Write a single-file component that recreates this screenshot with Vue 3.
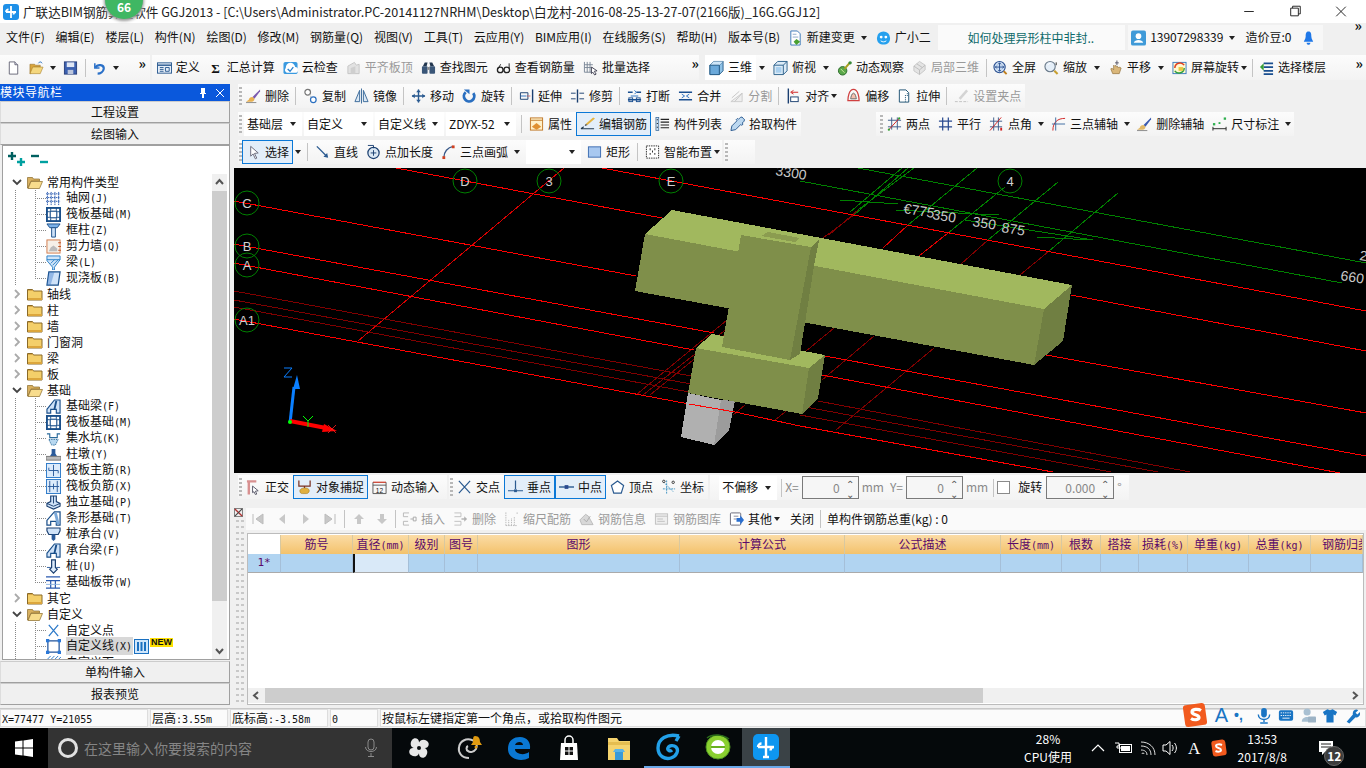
<template>
  <div class="app">
    <!-- barre de titre -->
    <header class="titlebar">
      <svg class="logo" viewBox="0 0 16 16"><rect width="16" height="16" rx="3" fill="#1e90e8" /><path d="M8 2v12M3 8h10M3 8a2.5 2.5 0 0 1 2.5-2.5M13 8a2.500 2.500 0 0 0-2.500 2.500" fill="none" stroke="#fff" stroke-width="1.800" /></svg>
      <span class="title-text">广联达BIM钢筋算量软件 GGJ2013 - [C:\Users\Administrator.PC-20141127NRHM\Desktop\白龙村-2016-08-25-13-27-07(2166版)_16G.GGJ12]</span>
      <div class="win-btns">
        <svg viewBox="0 0 46 24"><path d="M18 12h10" stroke="#222" /></svg>
        <svg viewBox="0 0 46 24"><path d="M18.500 8.500h8v8h-8zM20.500 8.500v-2h8v8h-2" fill="none" stroke="#222" /></svg>
        <svg viewBox="0 0 46 24"><path d="M18 7l10 10M28 7l-10 10" stroke="#222" /></svg>
      </div>
    </header>
    <div class="badge">66</div>

    <!-- menu -->
    <nav class="menubar">
      <span v-for="m in menus" :key="m" class="menu-item">{{ m }}</span>
      <span class="menu-extra first"><svg class="ic" viewBox="0 0 16 16" v-html="ic.change"></svg>新建变更<i class="caret"></i></span>
      <span class="menu-extra second"><svg class="ic" viewBox="0 0 16 16" v-html="ic.face"></svg>广小二</span>
      <span class="news">如何处理异形柱中非封..</span>
      <span class="user-box">
        <svg class="ic" viewBox="0 0 16 16" v-html="ic.user"></svg>13907298339<i class="caret"></i>
        <span class="bean">造价豆:0</span>
        <svg class="ic" viewBox="0 0 16 16" v-html="ic.bell"></svg>
      </span>
      <span class="more menu-more">»</span>
    </nav>

    <main class="body">
      <template v-for="row in rows" :key="row.id">
        <div v-if="row.id === 'canvas'" class="canvas">
          <svg viewBox="234 168 1132 305" width="1132" height="305" shape-rendering="crispEdges">
            <polyline v-for="(l, i) in scene.dark" :key="'d' + i" :points="l" stroke="#800000" fill="none" />
            <polyline v-for="(l, i) in scene.thin" :key="'t' + i" :points="l" stroke="#d80000" fill="none" />
            <polyline v-for="(l, i) in scene.green" :key="'g' + i" :points="l" stroke="#008000" fill="none" />
            <polyline v-for="(l, i) in scene.red" :key="'r' + i" :points="l" stroke="#ff0000" fill="none" />
            <g v-for="b in scene.bubbles" :key="b.t">
              <circle :cx="b.x" :cy="b.y" r="12" fill="none" stroke="#008000" shape-rendering="auto" />
              <text :x="b.x" :y="b.y + 5" text-anchor="middle" class="bubble-t" shape-rendering="auto">{{ b.t }}</text>
            </g>
            <text v-for="d in scene.dims" :key="d.t + d.x" :transform="`translate(${d.x} ${d.y}) rotate(9)`" class="dim-t">{{ d.t }}</text>
            <polygon v-for="(p, i) in scene.solids" :key="'s' + i" :points="p.pts" :fill="p.c" />
            <polyline points="689,404 735,412" stroke="#ff0000" fill="none" />
            <g shape-rendering="auto">
              <path d="M290 423l4-36" stroke="#0a7fff" stroke-width="3" />
              <path d="M297 375l-4 14h7z" fill="#0a7fff" />
              <path d="M290 421l36 7" stroke="#ff0000" stroke-width="4" />
              <path d="M337 431l-13-7-2 8z" fill="#ff0000" />
              <path d="M284 368h8l-8 9h8" fill="none" stroke="#0a7fff" />
              <path d="M303 416l5 5 5-5M308 421v6" fill="none" stroke="#00ff00" />
              <path d="M328 425l8 8M336 425l-8 8" fill="none" stroke="#ff2020" stroke-width=".8" />
              <circle cx="290" cy="422" r="2" fill="#00ff00" />
            </g>
          </svg>
        </div>

        <div v-else-if="row.id === 'table'" class="table-area">
          <div class="side-strip">
            <svg viewBox="0 0 10 10" class="close-x"><rect x=".5" y=".5" width="9" height="9" fill="#eee" stroke="#777" /><path d="M1 1l8 8" stroke="#b03030" stroke-width="1.500" /><path d="M9 1l-8 8" stroke="#444" stroke-width="1.200" /></svg>
            <i class="strip-dots"></i>
          </div>
          <div class="grid-box">
            <div class="grid-table">
              <div v-for="(h, i) in heads" :key="i" class="th">{{ h.t }}<span v-if="h.k" class="m">{{ h.k }}</span></div>
              <div v-for="(h, i) in heads" :key="'c' + i" class="td" :class="{ rowhead: i === 0, active: i === 2 }">{{ i === 0 ? '1*' : '' }}</div>
            </div>
            <div class="hscroll">
              <svg viewBox="0 0 16 15"><path d="M10 4l-4 3.500 4 3.500" fill="none" stroke="#555" stroke-width="2" /></svg>
              <div class="hthumb"></div>
              <svg class="hright" viewBox="0 0 16 15"><path d="M6 4l4 3.500-4 3.500" fill="none" stroke="#555" stroke-width="2" /></svg>
            </div>
          </div>
        </div>

        <div v-else class="row" :class="row.id">
          <div v-for="(seg, si) in row.segs" :key="si" class="seg" :class="seg.cls" :style="seg.ml ? { marginLeft: seg.ml + 'px' } : null">
            <template v-for="(it, k) in seg.items" :key="k">
              <i v-if="it.grip" class="grip"></i>
              <i v-else-if="it.sep" class="sep"></i>
              <span v-else-if="it.more" class="more">»</span>
              <i v-else-if="it.caret" class="caret" :class="{ tight: it.caret === 2 }"></i>
              <span v-else-if="it.combo !== undefined" class="combo" :style="{ width: it.w + 'px' }">{{ it.combo }}<i class="caret"></i></span>
              <span v-else-if="it.spin" class="spin" :style="{ width: it.w + 'px' }">{{ it.spin }}<span class="spin-btns"><b>⌃</b><b>⌄</b></span></span>
              <span v-else-if="it.lbl" class="lbl" :class="{ dark: it.dark }">{{ it.lbl }}</span>
              <i v-else-if="it.chk" class="chk"></i>
              <span v-else-if="it.nav" class="nav"><svg viewBox="0 0 14 14" v-html="ic[it.nav]"></svg></span>
              <span v-else class="ti" :class="{ off: it.off, on: it.on, white: it.white }">
                <svg v-if="it.i" class="ic" viewBox="0 0 16 16" v-html="ic[it.i]"></svg>
                <span v-if="it.t">{{ it.t }}</span>
              </span>
            </template>
          </div>
        </div>
      </template>

      <!-- navigation gauche -->
      <aside class="left">
        <div class="pane-title">
          <span>模块导航栏</span>
          <span class="pane-btns">
            <svg viewBox="0 0 12 12"><path d="M4 1h4v5h1v1H7v4H5V7H3V6h1z" fill="#fff" /></svg>
            <svg viewBox="0 0 12 12"><path d="M2 2l8 8M10 2l-8 8" stroke="#fff" /></svg>
          </span>
        </div>
        <div class="pane-tab">工程设置</div>
        <div class="pane-tab">绘图输入</div>
        <div class="tree-box">
          <div class="tree-tools">
            <svg viewBox="0 0 20 18"><path d="M5 1v8M1 5h8" stroke="#006060" stroke-width="2.400" /><path d="M14 7v8M10 11h8" stroke="#00a0a0" stroke-width="2.400" /></svg>
            <svg viewBox="0 0 20 18"><path d="M1 5h8" stroke="#006060" stroke-width="2.400" /><path d="M10 11h8" stroke="#00a0a0" stroke-width="2.400" /></svg>
          </div>
          <div class="tree-wrap">
            <div class="tree">
              <div v-for="n in tree" :key="n.id" class="tr" :class="[n.i ? 'leaf' : 'fold', { last: n.last, sel: n.sel }]">
                <template v-if="!n.i">
                  <svg class="chev" viewBox="0 0 10 10"><path :d="n.open ? 'M1 3l4 4 4-4' : 'M3 1l4 4-4 4'" fill="none" :stroke="n.open ? '#444' : '#aaa'" stroke-width="1.800" /></svg>
                  <svg class="fld" viewBox="0 0 16 14" v-html="n.open ? ic.fopen : ic.fclosed"></svg>
                </template>
                <svg v-else class="tree-ic" viewBox="0 0 16 16" v-html="ic[n.i]"></svg>
                <span class="tr-label">{{ n.t }}<span v-if="n.k" class="m">{{ n.k }}</span></span>
                <template v-if="n.sel">
                  <svg class="bars" viewBox="0 0 15 15"><rect x=".5" y=".5" width="14" height="14" fill="#cfe6fb" stroke="#1a70c0" /><path d="M4 3v9M7.500 3v9M11 3v9" stroke="#1a70c0" stroke-width="2" /></svg>
                  <em class="newtag">NEW</em>
                </template>
              </div>
            </div>
            <div class="vscroll">
              <svg viewBox="0 0 15 17"><path d="M4 10l3.500-4 3.500 4" fill="none" stroke="#555" stroke-width="2" /></svg>
              <div class="vtrack"><div class="vthumb"></div></div>
              <svg viewBox="0 0 15 17"><path d="M4 7l3.500 4 3.500-4" fill="none" stroke="#555" stroke-width="2" /></svg>
            </div>
          </div>
        </div>
        <div class="pane-tab">单构件输入</div>
        <div class="pane-tab">报表预览</div>
      </aside>
    </main>

    <footer class="status">
      <div class="st w1"><span class="m">X=77477 Y=21055</span></div>
      <div class="st w2">层高<span class="m">:3.55m</span></div>
      <div class="st w3">底标高<span class="m">:-3.58m</span></div>
      <div class="st w4"><span class="m">0</span></div>
      <div class="st w5">按鼠标左键指定第一个角点，或拾取构件图元</div>
    </footer>

    <!-- barre de saisie flottante -->
    <div class="ime">
      <svg class="ime-s" viewBox="0 0 26 26"><rect x="2" y="2" width="22" height="22" rx="3" fill="#f25a1e" transform="rotate(-8 13 13)" /><path d="M19 8.500c-3-2-9-1.500-9 1.500 0 3.500 7 2 7 5.500 0 2.500-5 3-8 1" fill="none" stroke="#fff" stroke-width="3.200" /></svg>
      <span class="ime-a">A</span>
      <span class="ime-dots">•,</span>
      <svg viewBox="0 0 16 18"><rect x="5" y="1" width="6" height="10" rx="3" fill="#1a75c4" /><path d="M2 8c0 7 12 7 12 0M8 13v3M4 17h8" fill="none" stroke="#1a75c4" stroke-width="1.500" /></svg>
      <svg viewBox="0 0 18 16"><rect x="1" y="2" width="16" height="12" rx="2" fill="#1a75c4" /><path d="M3 5h12M3 8h12" stroke="#fff" stroke-dasharray="1.500 1" /><path d="M5 11h8" stroke="#fff" /></svg>
      <svg viewBox="0 0 18 18"><circle cx="8" cy="5" r="4" fill="#a9c0d2" /><path d="M2 16c0-7 12-7 12 0z" fill="#a9c0d2" /><rect x="9" y="10" width="9" height="7" rx="1" fill="#9db3c5" /></svg>
      <svg viewBox="0 0 18 18"><path d="M6 2l3 1 3-1 5 3-2 4-2-1v9H5V8L3 9 1 5z" fill="#1a75c4" /></svg>
      <svg viewBox="0 0 18 18"><path d="M3 16l7-8c-1-4 3-7 6-5l-3 3 2 2 3-3c1 4-2 7-5 6l-7 7z" fill="#1a75c4" /></svg>
    </div>

    <!-- barre des tâches -->
    <footer class="taskbar">
      <div class="start"><svg viewBox="0 0 18 18"><path d="M0 2.500l7.500-1v7H0zM8.500 1.400L18 0v8.500H8.500zM0 9.500h7.500v7l-7.500-1zM8.500 9.500H18V18l-9.500-1.400z" fill="#fff" /></svg></div>
      <div class="search">
        <i class="ring"></i>
        <span class="search-text">在这里输入你要搜索的内容</span>
        <svg viewBox="0 0 14 20"><rect x="4" y="1" width="6" height="11" rx="3" fill="none" stroke="#8a8a8a" /><path d="M1.500 9c0 6 11 6 11 0M7 15v3M4 18.500h6" fill="none" stroke="#8a8a8a" /></svg>
      </div>
      <div v-for="a in taskApps" :key="a.id" class="app-cell" :class="a.cls">
        <svg viewBox="0 0 28 28" v-html="ic[a.id]"></svg>
      </div>
      <div class="tray">
        <div class="cpu"><span>28%</span><span>CPU使用</span></div>
        <svg class="tr1" viewBox="0 0 14 10"><path d="M1 8l6-6 6 6" fill="none" stroke="#fff" stroke-width="1.200" /></svg>
        <svg class="tr2" viewBox="0 0 18 14"><path d="M0 2h4v3H2v2h4" fill="none" stroke="#fff" /><rect x="4.500" y="3.500" width="12" height="8" fill="none" stroke="#fff" /><rect x="6" y="5" width="9" height="5" fill="#fff" /></svg>
        <svg class="tr3" viewBox="0 0 16 16"><path d="M2 14a1 1 0 0 1 2 0M1 10c4 0 6 2 6 5M1 6c6 0 10 3 10 9M1 2c8 0 14 5 14 13" fill="none" stroke="#ddd" /></svg>
        <svg class="tr4" viewBox="0 0 16 16"><path d="M1 5h3l4-3.500v13L4 11H1z" fill="none" stroke="#fff" /><path d="M10 5c1.500 2 1.500 4 0 6M12.500 3c2.500 3 2.500 7 0 10" fill="none" stroke="#fff" /></svg>
        <span class="tr5">A</span>
        <svg class="tr6" viewBox="0 0 18 18"><rect x="2" y="1" width="14" height="16" rx="3" fill="#f25a1e" transform="rotate(-8 9 9)" /><path d="M12 6c-2-1-6-1-6 1 0 2.500 5 1.500 5 4 0 2-3.500 2-5.500 1" fill="none" stroke="#fff" stroke-width="2" /></svg>
        <div class="clock"><span>13:53</span><span>2017/8/8</span></div>
        <div class="notif">
          <svg viewBox="0 0 16 16"><path d="M1 1h14v11H7l-3 3v-3H1z" fill="#fff" /><path d="M3 4h10M3 7h10" stroke="#222" /></svg>
          <b class="notif-n">12</b>
        </div>
      </div>
    </footer>
  </div>
</template>

<script setup>
const menus = ['文件(F)', '编辑(E)', '楼层(L)', '构件(N)', '绘图(D)', '修改(M)', '钢筋量(Q)', '视图(V)', '工具(T)', '云应用(Y)', 'BIM应用(I)', '在线服务(S)', '帮助(H)', '版本号(B)']

// petites icônes dessinées à la main
const ic = {
  new: '<path d="M3.500 1.500h6l3 3v10h-9z" fill="#fff" stroke="#667"/><path d="M9.500 1.500v3h3" fill="#dde" stroke="#667"/>',
  open: '<path d="M1 4h5l1 1h5v2H5l-3 7H1z" fill="#d9a53c" stroke="#96702a" stroke-width=".6"/><path d="M4 7h11l-3 7H1z" fill="#f4d77e" stroke="#a67f2e" stroke-width=".6"/><path d="M10 3c1-2 3-2 4 0" fill="none" stroke="#2a70c0"/>',
  save: '<rect x="1.500" y="1.500" width="13" height="13" fill="#3b60b0" stroke="#2a3f7a"/><rect x="4" y="2" width="8" height="5" fill="#dfe6f4"/><rect x="5" y="10" width="6" height="4.500" fill="#bcc6dc"/>',
  undo: '<path d="M3 3v5h5" fill="none" stroke="#2a70c8" stroke-width="1.600"/><path d="M3.500 7.500C6 3.500 13 4 12.500 9 12 12 9 14 6 14" fill="none" stroke="#2a70c8" stroke-width="2.400"/>',
  def: '<rect x=".5" y="2.500" width="15" height="11" fill="#e6eef8" stroke="#2a5a90"/><path d="M1 5h14" stroke="#2a5a90" stroke-width="1.500"/><path d="M3 7.500h4M3 9.500h4M3 11.500h4M9 7.500h4v4H9z" fill="none" stroke="#2a5a90"/>',
  sigma: '<text x="8" y="13" font-size="14" font-weight="bold" text-anchor="middle" font-family="Liberation Serif,serif" fill="#111">Σ</text>',
  cloud: '<rect x=".5" y="1.500" width="15" height="13" rx="2" fill="#3a9ae0"/><path d="M3 8a5 5 0 0 1 10-1 3 3 0 0 1 0 6H4a3 3 0 0 1-1-5z" fill="#fff"/><path d="M5 9l2.500 2.500L11 7" fill="none" stroke="#2a80cc" stroke-width="1.400"/>',
  plate: '<path d="M2 14V6l7-4 2 3 3-1v10z" fill="#e2e2e2" stroke="#c4c4c4"/><path d="M5 14V8l5-2v8z" fill="#cfcfcf"/>',
  binoc: '<path d="M2 6h4l1-4H4zM14 6h-4L9 2h3z" fill="#22364f"/><rect x="1" y="6" width="6" height="8" rx="1" fill="#3a5678"/><rect x="9" y="6" width="6" height="8" rx="1" fill="#3a5678"/><rect x="7" y="7" width="2" height="3" fill="#888"/>',
  glasses: '<circle cx="4.500" cy="10" r="3" fill="none" stroke="#222" stroke-width="1.400"/><circle cx="11.500" cy="10" r="3" fill="none" stroke="#222" stroke-width="1.400"/><path d="M7.500 10h1M2 9L5 4M14 9V3" stroke="#222" fill="none"/>',
  bulk: '<path d="M1.500 1.500v11h9M1.500 4.500h9M1.500 7.500h9M4.500 1.500v11M7.500 1.500v11" fill="none" stroke="#7a8696"/><path d="M9 7l6 4-3 .5 2 3-1.500 1-2-3L9 14z" fill="#fff" stroke="#445"/>',
  cube: '<path d="M1 5l4-4h10v10l-4 4H1z" fill="#8fc3e8" stroke="#2a5f8a"/><path d="M1 5h10v10M11 5l4-4" fill="none" stroke="#2a5f8a"/><path d="M1 5l4-4h10l-4 4z" fill="#cfe6f8"/><path d="M1 5h10v10H1z" fill="#6ba9da" stroke="#2a5f8a"/>',
  top: '<path d="M1 5l4-4h10v10l-4 4H1z" fill="#dcebf7" stroke="#2a5f8a"/><path d="M1 5h10v10M11 5l4-4" fill="none" stroke="#2a5f8a"/><path d="M3 7h6v6H3z" fill="#a8cfee"/>',
  orbit: '<circle cx="6" cy="11" r="4.500" fill="#5aa84a" stroke="#2a6a2a"/><path d="M8 9l6-7" stroke="#a8a020" stroke-width="2.200"/><circle cx="14" cy="2.500" r="1.800" fill="#3a8a3a"/><path d="M4 9l4 4" stroke="#d4e8a0"/>',
  local: '<path d="M2 6l6-5 6 4v5l-6 5-6-4z" fill="#e4e4e4" stroke="#c6c6c6"/><path d="M2 6l6 4 6-5M8 10v5M5 3.500l6 4" fill="none" stroke="#bcbcbc"/>',
  full: '<circle cx="7" cy="7" r="6" fill="#cfe0f4" stroke="#2a4f90" stroke-width="1.200"/><path d="M7 2.500v9M2.500 7h9" stroke="#2a4f90"/><path d="M5.500 4L7 2.500 8.500 4M5.500 10L7 11.500 8.500 10M4 5.500L2.500 7 4 8.500M10 5.500L11.500 7 10 8.500" fill="none" stroke="#2a4f90"/><path d="M11.500 11.500l3 3" stroke="#c08020" stroke-width="2"/>',
  zoom: '<circle cx="6.500" cy="6.500" r="5.500" fill="#e4eef8" stroke="#6a7a8a" stroke-width="1.200"/><path d="M4 5a3 3 0 0 1 3-2" stroke="#fff" fill="none"/><path d="M11 11l3.500 3.500" stroke="#c8a030" stroke-width="2.200"/><path d="M13 2v3" stroke="#222"/>',
  pan: '<path d="M3 9l2 5h7l2-6-2-1-1 1-1-2-1 1-1-2-1 1-1-1v5L4 8z" fill="#dab77a" stroke="#90703a" stroke-width=".7"/><path d="M9.500 0v5M7.500 2.500h4" stroke="#556" />',
  rot: '<rect x="1" y="2" width="14" height="12" fill="#fff8d0" stroke="#3a7ac0"/><path d="M3 8a5.500 5.500 0 0 1 10-3" fill="none" stroke="#e04020" stroke-width="1.600"/><path d="M13 8a5.500 5.500 0 0 1-10 3" fill="none" stroke="#30a040" stroke-width="1.600"/><rect x="7" y="7" width="5" height="4" fill="#e8c840"/>',
  floors: '<path d="M5 3h10M5 7h10M5 11h10M5 14.500h10" stroke="#1a4f90" stroke-width="2"/><path d="M1 7l4-4v8z" fill="#38a038"/>',
  del: '<path d="M15 1L7 9l2 2 6-8z" fill="#7b5ab0"/><path d="M7 9c-3 0-4 2-4 3l-3 2h6c2 0 3-1 3-3z" fill="#e8b050"/><path d="M0 15h11" stroke="#888"/>',
  copy: '<circle cx="5" cy="4" r="3" fill="#fff" stroke="#777" stroke-width="1.300"/><circle cx="11" cy="12" r="3" fill="#fff" stroke="#2a6fc0" stroke-width="1.300"/><path d="M7 6l2 4" stroke="#999" stroke-dasharray="1 1"/>',
  mirror: '<path d="M1 14L6 2v12zM15 14L10 2v12z" fill="#dbe8f4" stroke="#3a6a9a"/><path d="M8 0v16" stroke="#3a6a9a"/>',
  move: '<path d="M8 1v14M1 8h14" stroke="#2a5a90" stroke-width="1.500"/><path d="M5.500 4L8 1l2.500 3M5.500 12L8 15l2.500-3M4 5.500L1 8l3 2.500M12 5.500L15 8l-3 2.500" fill="#2a5a90"/>',
  turn: '<path d="M12 5a5.500 5.500 0 1 1-8-1" fill="none" stroke="#2a6fc0" stroke-width="3"/><path d="M2 1h6v5z" fill="#2a6fc0"/>',
  extend: '<path d="M14.500 1v14" stroke="#1a3f70" stroke-width="1.500"/><path d="M1.500 4.500h8v7h-8z" fill="none" stroke="#1a3f70"/><path d="M9 8h1M11 8h1" stroke="#d02020"/><path d="M2 8h6" stroke="#2a6fc0"/>',
  trim: '<path d="M8 1v14" stroke="#1a3f70" stroke-width="1.500"/><path d="M1 5h5M1 11h5M10 5h5M10 11h5" stroke="#1a3f70"/>',
  brk: '<path d="M1 4h5M10 4h5M1 12h14" stroke="#1a4f90" stroke-width="1.500"/><path d="M8 2l2 2-2 2M4 8h8" fill="none" stroke="#2a6fc0"/><rect x="2" y="10" width="4" height="4" fill="none" stroke="#1a4f90"/><rect x="10" y="10" width="4" height="4" fill="none" stroke="#1a4f90"/>',
  merge: '<path d="M1 4h14M1 12h14" stroke="#1a4f90" stroke-width="1.500"/><path d="M4 6L7 8 4 10M12 6L9 8l3 2" fill="none" stroke="#2a6fc0"/>',
  split: '<path d="M2 14h12v-9z" fill="#eee" stroke="#ccc"/><path d="M3 10l8-7M6 14l8-9" stroke="#c4c4c4"/>',
  align: '<path d="M2.500 0v16" stroke="#1a3f70" stroke-width="1.500"/><rect x="5" y="9" width="8" height="5" fill="#fff" stroke="#1a3f70"/><path d="M13 4H6M8 2L5 4l3 2" fill="none" stroke="#d02020"/>',
  offset: '<path d="M8 1c5 0 6 9 6 12H2C2 10 3 1 8 1z" fill="none" stroke="#d04040" stroke-width="1.300"/><path d="M8 5c2 0 3 5 3 6H5c0-1 1-6 3-6z" fill="#f4c0b0" stroke="#666"/>',
  stretch: '<path d="M2.500 1.500h7l3 3v10h-10z" fill="#fff" stroke="#1a4f70"/><path d="M9 7v7M11 5v3" stroke="#1a4f70" stroke-dasharray="1 1"/>',
  grippt: '<path d="M13 1L5 10l2 2 8-9z" fill="#d4d4d4"/><path d="M1 14h14" stroke="#c0c0c0" stroke-dasharray="3 1.500"/>',
  attr: '<rect x="1.500" y="1.500" width="13" height="13" fill="#fff0c8" stroke="#c07828"/><path d="M1.500 4h13" stroke="#c07828"/><path d="M3 11l5-4 5 4-5 3z" fill="#e09030"/>',
  edit: '<path d="M14 1l2 1-8 7-2-1z" fill="#e4b440"/><path d="M6 8l2 1-3 1z" fill="#333"/><path d="M1 13h14M1 13l3-2" fill="none" stroke="#20384f" stroke-width="1.200"/>',
  list: '<rect x="1" y="1" width="3" height="14" fill="#cfe0f0" stroke="#3a6a9a" stroke-width=".8"/><path d="M6 3h9M6 6h9M6 9h9M6 12h9M2.500 3v1M2.500 7v1M2.500 11v1" stroke="#222" stroke-width="1.200"/>',
  pick: '<path d="M14 2a2 2 0 0 0-3-1L9 3 8 2 6.500 3.500l1 1L2 10l-1 5 5-1 5.500-5.500 1 1L14 8l-1-1 2-2a2 2 0 0 0-1-3z" fill="#bcd8f0" stroke="#2a5a90"/>',
  twopt: '<path d="M5 1v13M1 4h14M11 1v13M1 11h14" stroke="#3a5a8a"/><path d="M2 14L13 2" stroke="#d02020"/><circle cx="13" cy="2" r="1.200" fill="#30a030"/><circle cx="2" cy="14" r="1.200" fill="#30a030"/>',
  para: '<path d="M5 1v14M11 1v14M1 5h14M1 11h14" stroke="#2a4a90" stroke-width="1.300"/>',
  ang: '<path d="M5 1v14M10 1v14M1 5h13M1 11h13" stroke="#3a5a8a"/><path d="M1 15L13 1" stroke="#d02020"/><path d="M13 12v3" stroke="#d02020" stroke-width="2"/>',
  arc3: '<path d="M2 15C2 6 7 2 15 2" fill="none" stroke="#d02020"/><path d="M5 1v14M1 8h14" stroke="#3a6aa0"/>',
  brush: '<path d="M15 1L7 9l2 2 6-8z" fill="#3a5ab0"/><path d="M7 9c-3 0-4 2-4 3l-3 2h6c2 0 3-1 3-3z" fill="#e0b868"/><path d="M0 15h11" stroke="#888"/>',
  dim: '<path d="M1 11v4M15 11v4M1 13h14" stroke="#222"/><rect x="1" y="7" width="2.500" height="2.500" fill="#30b050"/><rect x="12.500" y="1" width="2.500" height="2.500" fill="#30b050"/><rect x="7" y="6" width="2" height="2" fill="#30b050"/>',
  select: '<path d="M5 2l8 7-4 .5 2.500 5-1.500.8L7.500 10 5 12.500z" fill="#fff" stroke="#667"/>',
  line: '<path d="M2 2l11 11" stroke="#2a5a90" stroke-width="1.400"/><path d="M14 14l-5-1 4-4z" fill="#2a5a90"/>',
  ptlen: '<circle cx="8" cy="9" r="6" fill="#dbe8f4" stroke="#1a3f70" stroke-width="1.300"/><path d="M8 6v6M5 9h6" stroke="#1a3f70"/><path d="M2 1h6v3" fill="none" stroke="#1a3f70"/>',
  arc: '<path d="M3 14C3 8 7 3 13 2" fill="none" stroke="#3a5a8a" stroke-width="1.400"/><rect x="1.500" y="12.500" width="3" height="3" fill="#d04020"/><rect x="11.500" y="1" width="3" height="3" fill="#d04020"/>',
  rect: '<rect x="1.500" y="2.500" width="13" height="11" fill="#a8c8f0" stroke="#3a6ab0"/>',
  smart: '<rect x="1.500" y="1.500" width="13" height="13" fill="#fff" stroke="#222" stroke-dasharray="1.500 1"/><path d="M5 5h1M10 5h1M5 10h1M10 10h1M7.500 7.500h1" stroke="#222" stroke-width="2"/>',
  ortho: '<path d="M1 2h10M3 2v14" stroke="#d89090" stroke-width="2.600"/><path d="M7 7l6 5-3 .5 1.500 3-1.500.5-1.500-3L7 14z" fill="#fff" stroke="#556"/>',
  snap: '<path d="M2 1v6h12V1M8 7v2" fill="none" stroke="#7a3020" stroke-width="1.300"/><path d="M3 12c0-3 7-4 9-2 2 1 1 5-2 5H6c-2 0-3-1-3-3z" fill="#e0b040" stroke="#a07818" stroke-width=".6"/>',
  dyn: '<path d="M1 3h14" stroke="#d05040" stroke-width="1.500"/><path d="M1 6h14M1 3v12M15 3v12M1 15h14" fill="none" stroke="#555"/><text x="8" y="14" font-size="7" text-anchor="middle" font-family="Liberation Sans,sans-serif" fill="#111">12</text>',
  cross: '<path d="M2 1.500l12 13M14 1.500l-12 13" stroke="#2a5a90" stroke-width="1.300"/>',
  perp: '<path d="M8 1v9M0 12h16" stroke="#2a5a90" stroke-width="1.300"/><rect x="6.500" y="10.500" width="3" height="3" fill="#2a5a90"/>',
  mid: '<path d="M0 8h16" stroke="#2a5a90" stroke-width="1.500"/><rect x="6" y="6" width="4" height="4" fill="#2a4a90"/>',
  vertex: '<path d="M8 1.500l6.500 5-2.500 8H4l-2.500-8z" fill="#fff" stroke="#2a5a90" stroke-width="1.300"/>',
  coord: '<path d="M6 1v14M2 10h13" stroke="#3a90c0" stroke-dasharray="2 1"/><path d="M3 3l10 10" stroke="#3a90c0" stroke-dasharray="1.500 1"/><circle cx="3" cy="2" r="1.300" fill="none" stroke="#333"/><circle cx="13" cy="3" r="1.300" fill="none" stroke="#333"/>',
  first: '<path d="M2 2v10M12 2L5 7l7 5z" fill="#c8c8c8" stroke="#bcbcbc"/>',
  prev: '<path d="M10 2L4 7l6 5z" fill="#c8c8c8"/>',
  next: '<path d="M4 2l6 5-6 5z" fill="#c8c8c8"/>',
  lastn: '<path d="M12 2v10M2 2l7 5-7 5z" fill="#c8c8c8" stroke="#bcbcbc"/>',
  up: '<path d="M7 2L2 7h3v5h4V7h3z" fill="#c8c8c8"/>',
  down: '<path d="M7 12l5-5H9V2H5v5H2z" fill="#c8c8c8"/>',
  ins: '<path d="M1.500 1.500h6M1.500 14.500h6M1.500 1.500v4h5M1.500 14.500v-4h5" fill="none" stroke="#b8b8b8"/><path d="M9 8h3M12 6h3v4h-3z" fill="none" stroke="#a8a8a8"/>',
  rm: '<path d="M1.500 1.500h7v4h-7M1.500 14.500h7v-4h-7" fill="none" stroke="#c0c0c0"/><path d="M9 8h4" stroke="#b0b0b0" stroke-width="1.500"/><path d="M12 5l3 3-3 3z" fill="#b0b0b0"/>',
  scale: '<path d="M2 1v14M14 1v2M2 15h12M5 15V9M8 15V7M11 15V5" stroke="#b8b8b8" stroke-dasharray="1.500 1"/>',
  info: '<path d="M1 9l6-6 3 2 5 9H3z" fill="#d8d8d8" stroke="#bbb"/><path d="M5 8l3 3 4-6" stroke="#aaa" fill="none"/>',
  lib: '<rect x="1.500" y="2.500" width="13" height="11" fill="#eee" stroke="#c0c0c0"/><path d="M1.500 5h13M3.500 8h6M3.500 10.500h8" stroke="#c0c0c0"/>',
  other: '<rect x="1.500" y="1.500" width="11" height="13" rx="1" fill="#fff" stroke="#667"/><path d="M5 5h5M5 8h3" stroke="#889"/><path d="M8 7h4V4l4 5-4 5v-3H8z" fill="#2a6fd0"/>',
  change: '<path d="M3 .5h7l3 3v12H3z" fill="#fff" stroke="#3a78b8"/><path d="M5 4h4M5 7h6" stroke="#8aa8c8"/><path d="M9 9l4 3-4 3.500L6 12z" fill="#4aa030"/>',
  face: '<path d="M8 1a7 7 0 0 1 7 7c0 5-3 7-7 7s-7-2-7-7a7 7 0 0 1 7-7z" fill="#25a0ee"/><circle cx="5.500" cy="7" r="1.500" fill="#fff"/><circle cx="10.500" cy="7" r="1.500" fill="#fff"/><path d="M5 11c2 1.500 4 1.500 6 0" fill="none" stroke="#fff"/>',
  user: '<rect width="16" height="16" rx="2" fill="#3f9ad8"/><circle cx="8" cy="6" r="3" fill="#fff"/><path d="M3 13c1-4 9-4 10 0z" fill="#fff"/>',
  bell: '<path d="M8 1c3 0 3 3 3 5 0 3 2 5 2 6H3c0-1 2-3 2-6 0-2 0-5 3-5z" fill="#1f78e8"/><path d="M6 13c0 3 4 3 4 0z" fill="#1f78e8"/>',
  fclosed: '<path d="M.5 2.500h5l1 1.500h8.500v9H.5z" fill="#f4cf6a" stroke="#8a6a28"/><path d="M1 3h5v1H1z" fill="#d8a84a"/><path d="M1 11h14v2H1z" fill="#dca63c"/>',
  fopen: '<path d="M.5 2.500h5l1 1.500h6v2H4l-3 7H.5z" fill="#d8b060" stroke="#8a6a28" stroke-width=".7"/><path d="M4 6.500h11.500l-3 7H1z" fill="#f8dc8c" stroke="#8a6a28" stroke-width=".7"/>',
  grid: '<path d="M1.500 1v14M5.500 1v14M9.500 1v14M13.500 1v14M0 3h15M0 7h15M0 11h15" stroke="#2a5ab0" stroke-dasharray="1.500 .6"/>',
  raft: '<rect x="1" y="1" width="14" height="14" fill="none" stroke="#1a4f8a" stroke-width="2"/><rect x="4.500" y="4.500" width="7" height="7" fill="none" stroke="#1a4f8a" stroke-width="1.200"/><path d="M1 5h3M12 5h3M1 11h3M12 11h3M5 1v3M11 1v3M5 12v3M11 12v3" stroke="#1a4f8a"/>',
  column: '<path d="M1 1h14l-3 4H4z" fill="#7ab0e8" stroke="#1a4f8a"/><path d="M6 5h4v10H6z" fill="#cfe2f8" stroke="#1a4f8a"/>',
  wall: '<rect x="1" y="1" width="14" height="14" fill="#f6f0e8" stroke="#d07848"/><path d="M3 13h9v-3l-4-3-3 2z" fill="#bbb"/><path d="M13 4h3M13 8h3M13 12h3" stroke="#c05020"/>',
  beam: '<path d="M1 1h14v4L9 13v3H7v-3L1 6z" fill="#cfe4f8" stroke="#2a80c8"/><path d="M1 5h14M5 9l4-4M7 11l6-6" stroke="#2a80c8"/>',
  slab: '<path d="M3 1h12l-2 14H1z" fill="#cfe2f8" stroke="#1a4f8a" stroke-width="1.300"/><path d="M3 1h6L5 15H1z" fill="#3a78c8" opacity=".4"/>',
  fbeam: '<path d="M1 15V11L9 1h6v14h-4v-4H5v4z" fill="#cfe2f8" stroke="#1a4f8a" stroke-width="1.200"/><path d="M11 2L9 11" stroke="#1a4f8a" stroke-width="2"/>',
  pit: '<path d="M1 3h3v4h8V3h3" fill="none" stroke="#2a6a9a" stroke-width="1.200"/><path d="M3 9h10l-3 6H6z" fill="#b8d8f0" stroke="#2a6a9a" stroke-dasharray="1.500 1"/>',
  pier: '<path d="M6 2h4v5l2 3H4l2-3z" fill="#2a5a9a"/><rect x="0" y="10" width="16" height="4" fill="#bbb" stroke="#777"/>',
  mainbar: '<rect x=".5" y=".5" width="15" height="15" fill="#dcebfb" stroke="#2a78c8"/><path d="M8 2v12M3 8h10M3 8V5M13 8v3" stroke="#2a5a9a" fill="none"/>',
  negbar: '<rect x=".5" y=".5" width="15" height="15" fill="#dcebfb" stroke="#2a78c8"/><path d="M4 2v12M12 2v12M2 8h12M8 5v6" stroke="#2a5a9a" fill="none"/>',
  footing: '<path d="M5 1h6v6l4 2v3l-7 3-7-3V9l4-2z" fill="#cfe2f8" stroke="#1a3f70" stroke-width="1.200"/><path d="M8 1v8M1 9l7 3 7-3" stroke="#1a3f70" fill="none"/>',
  strip: '<path d="M1 15v-5L7 3l2-2h6v14h-4v-4H5v4z" fill="#fff" stroke="#1a4f8a" stroke-width="1.300"/><path d="M10 2l3 12" stroke="#7aa8d8" stroke-width="3"/>',
  cap: '<path d="M1 1h14v3l-2 4H3L1 4z" fill="#cfe2f8" stroke="#1a3f70" stroke-width="1.200"/><path d="M6 8h4v5l-2 2-2-2z" fill="#2a5a9a"/>',
  pile: '<path d="M6 1h4v8l2 2-4 4-4-4 2-2z" fill="#dcebfb" stroke="#1a3f70" stroke-width="1.300"/><path d="M1 9h4M11 9h4" stroke="#2a5a9a"/>',
  band: '<path d="M0 2h15M0 6h15M0 14h15M5 6v8M10 6v8" stroke="#2a5ab0" stroke-width="1.300" /><path d="M0 10h15" stroke="#8ab0e0"/>',
  xpt: '<path d="M3 2l10 12M13 2L3 14" stroke="#2a78c8" stroke-width="1.300"/>',
  xline: '<rect x="2" y="2" width="12" height="12" fill="none" stroke="#1a4f9a" stroke-width="1.300"/><g fill="#2a78d8"><rect x="0" y="0" width="3.500" height="3.500"/><rect x="12.500" y="0" width="3.500" height="3.500"/><rect x="0" y="12.500" width="3.500" height="3.500"/><rect x="12.500" y="12.500" width="3.500" height="3.500"/></g>',
  hatch: '<path d="M1 5L5 1M5 5l4-4M9 5l4-4M13 5l3-3" stroke="#2a78c8"/>',
  pinwheel: '<g fill="#e8e8e8"><path d="M14 14C6 16 4 10 7 6c2-3 7-2 7 2zM14 14c8-2 10 4 7 8-2 3-7 2-7-2z"/><path d="M14 14c-2-8 4-10 8-7 3 2 2 7-2 7zM14 14c2 8-4 10-8 7-3-2-2-7 2-7z"/></g><circle cx="14" cy="14" r="2" fill="#0a0e10"/>',
  spiral: '<path d="M14 24C6 24 3 18 4 13 5 7 11 4 17 6c4 1 6 5 4 9-2 3-6 4-8 2-2-1-2-4 0-5" fill="none" stroke="#ccc" stroke-width="2"/><path d="M20 2c4 0 5 3 5 6l2 3H16l2-3c0-3 0-6 2-6z" fill="#e09a10"/><circle cx="21" cy="13" r="1.500" fill="#e09a10"/>',
  edge: '<path d="M3 15C3 6 9 3 15 3c7 0 11 5 10 12H10c0 5 9 7 14 3v6c-7 4-21 2-21-9z" fill="#0a78d4"/><path d="M10 11h8c0-4-7-4-8 0z" fill="#0a0e10"/>',
  store: '<path d="M6 9h16l1 17H5z" fill="#fff"/><path d="M10 9V6a4 4 0 0 1 8 0v3" fill="none" stroke="#fff" stroke-width="1.500"/><path d="M10 13h3.500v3.500H10zM14.500 13H18v3.500h-3.500zM10 17.500h3.500V21H10zM14.500 17.500H18V21h-3.500z" fill="#111"/>',
  folder: '<path d="M3 4h9l2 3h11v19H3z" fill="#f5d36e"/><path d="M3 8h22v3H3z" fill="#e5bd50"/><path d="M10 18h8v8h-8z" fill="#3a9ad8"/><path d="M8 18h12l-2-3h-8z" fill="#5ab4e8"/>',
  gapp: '<path d="M24 3C12 0 3 6 3 15c0 8 7 12 13 10 6-2 8-8 5-11-2-2-7-2-8 1-1 2 2 4 4 2M24 3l-3 5" fill="none" stroke="#22a0e8" stroke-width="3.400"/>',
  gie: '<circle cx="14" cy="14" r="12" fill="#8ad030" stroke="#4a9020"/><circle cx="14" cy="14" r="7" fill="#fff"/><path d="M7 13h14v2H7z" fill="#6ab020"/><path d="M3 5C8 1 18 1 25 6" fill="none" stroke="#2a6a1a" stroke-width="1.500"/>',
  gact: '<rect x="1" y="1" width="26" height="26" rx="5" fill="#0e96f0"/><path d="M14 4v20M6 14h16M6 14a3.500 3.500 0 0 1 3.500-3.500M22 14a3.500 3.500 0 0 0-3.500 3.500M11 24h6" fill="none" stroke="#fff" stroke-width="2.400"/>'
}

// barres d'outils dans l'ordre de la page
const grip = { grip: 1 }
const sep = { sep: 1 }
const more = { more: 1 }
const caret = { caret: 1 }
const tight = { caret: 2 }
const combo = (text, w) => ({ combo: text, w })
const spin = (text, w) => ({ spin: text, w })

const rows = [
  {
    id: 'r0',
    segs: [
      { cls: 'w0', items: [{ i: 'new' }, { i: 'open' }, caret, { i: 'save' }, sep, { i: 'undo' }, caret, more] },
      { cls: 'w1', items: [
        { i: 'def', t: '定义' }, { i: 'sigma', t: '汇总计算' }, { i: 'cloud', t: '云检查' }, { i: 'plate', t: '平齐板顶', off: 1 },
        { i: 'binoc', t: '查找图元' }, { i: 'glasses', t: '查看钢筋量' }, { i: 'bulk', t: '批量选择' }, more
      ] },
      { cls: 'w2', items: [
        { i: 'cube', t: '三维', white: 1 }, caret, { i: 'top', t: '俯视' }, caret, { i: 'orbit', t: '动态观察' }, { i: 'local', t: '局部三维', off: 1 }, sep,
        { i: 'full', t: '全屏' }, { i: 'zoom', t: '缩放' }, caret, { i: 'pan', t: '平移' }, caret, { i: 'rot', t: '屏幕旋转' }, tight, sep, { i: 'floors', t: '选择楼层' }, more
      ] }
    ]
  },
  {
    id: 'r1',
    segs: [{ items: [
      grip, { i: 'del', t: '删除' }, sep, { i: 'copy', t: '复制' }, { i: 'mirror', t: '镜像' }, sep, { i: 'move', t: '移动' }, { i: 'turn', t: '旋转' }, sep,
      { i: 'extend', t: '延伸' }, { i: 'trim', t: '修剪' }, sep, { i: 'brk', t: '打断' }, { i: 'merge', t: '合并' }, { i: 'split', t: '分割', off: 1 }, sep,
      { i: 'align', t: '对齐' }, tight, { i: 'offset', t: '偏移' }, { i: 'stretch', t: '拉伸' }, sep, { i: 'grippt', t: '设置夹点', off: 1 }
    ] }]
  },
  {
    id: 'r2',
    segs: [
      { items: [
        grip, combo('基础层', 58), combo('自定义', 69), combo('自定义线', 69), combo('ZDYX-52', 70), sep,
        { i: 'attr', t: '属性' }, { i: 'edit', t: '编辑钢筋', on: 1 }, { i: 'list', t: '构件列表' }, { i: 'pick', t: '拾取构件' }
      ] },
      { cls: 'aux', ml: 75, items: [
        grip, { i: 'twopt', t: '两点' }, { i: 'para', t: '平行' }, { i: 'ang', t: '点角' }, caret, { i: 'arc3', t: '三点辅轴' }, caret,
        { i: 'brush', t: '删除辅轴' }, { i: 'dim', t: '尺寸标注' }, caret
      ] }
    ]
  },
  {
    id: 'r3',
    segs: [
      { items: [
        grip, { i: 'select', t: '选择', on: 1 }, caret, sep, { i: 'line', t: '直线' }, { i: 'ptlen', t: '点加长度' }, { i: 'arc', t: '三点画弧' }, caret,
        combo('', 55), { i: 'rect', t: '矩形' }, sep, { i: 'smart', t: '智能布置' }, tight
      ] },
      { cls: 'stub', items: [grip] }
    ]
  },
  { id: 'canvas' },
  {
    id: 'r4',
    segs: [
      { cls: 'first', items: [grip, { i: 'ortho', t: '正交' }, { i: 'snap', t: '对象捕捉', on: 1 }, { i: 'dyn', t: '动态输入' }] },
      { items: [
        grip, { i: 'cross', t: '交点' }, { i: 'perp', t: '垂点', on: 1 }, { i: 'mid', t: '中点', on: 1 }, { i: 'vertex', t: '顶点' }, { i: 'coord', t: '坐标' }
      ] },
      { cls: 'inputs', items: [
        combo('不偏移', 58), sep, { lbl: 'X=' }, spin('0', 57), { lbl: 'mm' }, { lbl: 'Y=' }, spin('0', 57), { lbl: 'mm' }, sep, { chk: 1 },
        { lbl: '旋转', dark: 1 }, spin('0.000', 68), { lbl: '°' }
      ] }
    ]
  },
  {
    id: 'r5',
    segs: [{ items: [
      { nav: 'first' }, { nav: 'prev' }, { nav: 'next' }, { nav: 'lastn' }, sep, { nav: 'up' }, { nav: 'down' }, sep,
      { i: 'ins', t: '插入', off: 1 }, { i: 'rm', t: '删除', off: 1 }, { i: 'scale', t: '缩尺配筋', off: 1 }, { i: 'info', t: '钢筋信息', off: 1 }, { i: 'lib', t: '钢筋图库', off: 1 },
      { i: 'other', t: '其他' }, tight, { t: '关闭' }, sep, { t: '单构件钢筋总重(kg) : 0' }
    ] }]
  },
  { id: 'table' }
]

const heads = [
  { t: '' }, { t: '筋号' }, { t: '直径', k: '(mm)' }, { t: '级别' }, { t: '图号' }, { t: '图形' }, { t: '计算公式' }, { t: '公式描述' },
  { t: '长度', k: '(mm)' }, { t: '根数' }, { t: '搭接' }, { t: '损耗', k: '(%)' }, { t: '单重', k: '(kg)' }, { t: '总重', k: '(kg)' }, { t: '钢筋归类' }
]

const tree = [
  { t: '常用构件类型', open: 1 },
  { i: 'grid', t: '轴网', k: '(J)' },
  { i: 'raft', t: '筏板基础', k: '(M)' },
  { i: 'column', t: '框柱', k: '(Z)' },
  { i: 'wall', t: '剪力墙', k: '(Q)' },
  { i: 'beam', t: '梁', k: '(L)' },
  { i: 'slab', t: '现浇板', k: '(B)', last: 1 },
  { t: '轴线' }, { t: '柱' }, { t: '墙' }, { t: '门窗洞' }, { t: '梁' }, { t: '板' },
  { t: '基础', open: 1 },
  { i: 'fbeam', t: '基础梁', k: '(F)' },
  { i: 'raft', t: '筏板基础', k: '(M)' },
  { i: 'pit', t: '集水坑', k: '(K)' },
  { i: 'pier', t: '柱墩', k: '(Y)' },
  { i: 'mainbar', t: '筏板主筋', k: '(R)' },
  { i: 'negbar', t: '筏板负筋', k: '(X)' },
  { i: 'footing', t: '独立基础', k: '(P)' },
  { i: 'strip', t: '条形基础', k: '(T)' },
  { i: 'cap', t: '桩承台', k: '(V)' },
  { i: 'fbeam', t: '承台梁', k: '(F)' },
  { i: 'pile', t: '桩', k: '(U)' },
  { i: 'band', t: '基础板带', k: '(W)', last: 1 },
  { t: '其它' },
  { t: '自定义', open: 1 },
  { i: 'xpt', t: '自定义点' },
  { i: 'xline', t: '自定义线', k: '(X)', sel: 1 },
  { i: 'hatch', t: '自定义面' }
].map((n, id) => ({ ...n, id }))

const taskApps = [
  { id: 'pinwheel' }, { id: 'spiral' }, { id: 'edge' }, { id: 'store' }, { id: 'folder' },
  { id: 'gapp', cls: 'run' }, { id: 'gie', cls: 'run narrow' }, { id: 'gact', cls: 'run narrow active' }
]

// scène 3D en coordonnées de la page
const scene = {
  red: [
    '234,201 636,276', '1035,353 1366,413',
    '234,244 714,333', '825,356 1366,456',
    '234,263 694,350', '822,375 1340,473',
    '234,319 689,404', '735,412 800,426 1053,472',
    '396,168 662,218', '1071,295 1366,351',
    '602,168 800,205 1366,311'
  ],
  dark: [
    '234,291 691,376', '234,300 691,384', '234,307 689,392',
    '818,401 1190,472', '800,406 1158,472', '800,415 1111,472',
    '636,395 727,320', '643,395 733,324', '650,395 740,322',
    '703,396 712,390', '733,415 745,405', '775,420 790,408',
    '823,238 854,215', '829,235 858,210', '834,328 800,356', '874,336 822,380', '934,348 836,430',
    '961,264 988,240', '1020,275 1049,251'
  ],
  thin: ['564,168 358,341', '883,248 908,225', '919,256 948,233'],
  green: [
    '858,168 1366,263', '800,181 1342,283',
    '840,200 898,204', '896,210 999,215', '965,220 1093,240', '1037,237 1091,240',
    '854,215 908,168', '858,210 914,168', '850,212 902,168',
    '908,225 977,168', '948,233 1005,187', '988,240 1058,182', '1049,251 1118,193'
  ],
  bubbles: [
    { t: 'D', x: 465, y: 181 }, { t: '3', x: 549, y: 181 }, { t: 'E', x: 671, y: 181 }, { t: '4', x: 1010, y: 181 },
    { t: 'C', x: 247, y: 203 }, { t: 'B', x: 247, y: 246 }, { t: 'A', x: 247, y: 265 }, { t: 'A1', x: 247, y: 320 }
  ],
  dims: [
    { t: '3300', x: 775, y: 175 }, { t: '€775', x: 903, y: 213 }, { t: '350', x: 932, y: 219 }, { t: '350', x: 972, y: 226 },
    { t: '875', x: 1001, y: 232 }, { t: '2', x: 1359, y: 260 }, { t: '660', x: 1340, y: 280 }
  ],
  solids: [
    { c: '#b0b0b0', pts: '688,393 681,437 714,445 721,400' },
    { c: '#9c9c9c', pts: '721,400 735,401 729,431 714,445' },
    { c: '#a1b85e', pts: '672,210 1072,285 1044,309 645,234' },
    { c: '#7f8f4a', pts: '645,234 1044,309 1034,365 635,291' },
    { c: '#707f42', pts: '1072,285 1063,341 1034,365 1044,309' },
    { c: '#a1b85e', pts: '712,334 825,355 809,368 696,348' },
    { c: '#7f8f4a', pts: '696,348 809,368 802,414 688,393' },
    { c: '#707f42', pts: '825,355 818,398 802,414 809,368' },
    { c: '#7f8f4a', pts: '741,235 811,247 790,360 722,347' },
    { c: '#707f42', pts: '811,247 819,240 814,266 805,323 800,354 790,360' },
    { c: '#8b9c50', pts: '761,236 768,232 800,238 795,242' }
  ]
}
</script>

<style scoped>
.app {
  position: relative;
  width: 1366px;
  height: 768px;
  overflow: hidden;
  background: #f0f0f0;
  font: 12px/1.2 "Noto Sans CJK SC", "Liberation Sans", sans-serif;
  color: #111;
}

svg { display: block; }

/* titre */
.titlebar {
  display: flex;
  align-items: center;
  height: 23px;
  background: #fff;
  padding-left: 3px;
}
.logo { width: 16px; height: 16px; margin-right: 4px; }
.title-text { font-size: 12.580px; white-space: nowrap; color: #222; }
.win-btns { display: flex; margin-left: auto; margin-right: 2px; }
.win-btns svg { width: 46px; height: 23px; }

.badge {
  position: absolute;
  left: 105px;
  top: -19px;
  width: 38px;
  height: 38px;
  box-sizing: border-box;
  padding-top: 19px;
  border-radius: 50%;
  background: #3fb763;
  box-shadow: 0 1px 3px 1px #999;
  color: #fff;
  font-weight: 700;
  font-size: 12px;
  text-align: center;
}

/* menu */
.menubar {
  display: flex;
  align-items: center;
  height: 29px;
  padding-left: 6px;
  gap: 10.750px;
  white-space: nowrap;
}
.menu-extra { display: flex; align-items: center; }
.menu-extra .ic { margin-right: 4px; }
.menu-extra.first { margin-left: -3px; }
.menu-extra.second { margin-left: -2px; }
.news {
  width: 187px;
  margin-left: -3px;
  height: 25px;
  line-height: 25px;
  background: #fafafa;
  padding-left: 29px;
  box-sizing: border-box;
  color: #0e6a6a;
}
.user-box {
  display: flex;
  align-items: center;
  height: 25px;
  margin-left: -8px;
  padding-left: 3px;
  width: 192px;
  background: #f7f7f7;
}
.user-box .ic { margin-right: 4px; }
.bean { margin: 0 10px 0 10px; }
.menu-more { margin-left: 25px; }

/* corps */
.body {
  display: grid;
  grid-template-columns: 234px 1132px;
  grid-template-rows: 32px 28px 28px 28px 305px 32px 28px 175px;
}
.left {
  grid-column: 1;
  grid-row: 2 / span 7;
  width: 230px;
  height: 621px;
  display: flex;
  flex-direction: column;
}
.row { grid-column: 2; display: flex; align-items: flex-start; }
.row.r0 { grid-column: 1 / span 2; padding-top: 3px; gap: 2px; }
.row.r4 { padding-top: 2px; gap: 2px; padding-left: 4px; }
.row.r1, .row.r2, .row.r3 { padding-left: 4px; }
.row.r5 { padding-top: 3px; padding-left: 12px; }
.canvas { grid-column: 2; height: 305px; background: #000; overflow: hidden; }
.table-area { grid-column: 2; display: flex; }

/* barres d'outils */
.seg {
  display: flex;
  align-items: center;
  height: 24px;
  background: linear-gradient(#fcfcfc, #f3f3f3);
  white-space: nowrap;
}
.r0 .seg { height: 25px; }
.seg.w0 { width: 150px; padding-left: 2px; box-sizing: border-box; }
.seg.w1 { width: 548px; padding-left: 1px; box-sizing: border-box; }
.seg.w1 .more { padding-right: 0; }
.seg.w2 { width: 662px; margin-left: 4px; box-sizing: border-box; }
.seg.w2 .more { padding-right: 3px; }
.seg.w2 .caret { margin: 0 4px 0 3px; }
.seg.w2 .caret.tight { margin: 0 2px 0 -2px; }
.r5 .seg { width: 1120px; height: 22px; background: #fafafa; }
.seg.stub { width: 31px; margin-left: 2px; }
.seg.aux { padding-left: 3px; }
.seg.first { padding-right: 4px; }
.seg.inputs { height: 25px; padding-left: 9px; padding-right: 4px; }
.ti { display: flex; align-items: center; height: 100%; padding: 0 4px; gap: 4px; box-sizing: border-box; }
.ti.off { color: #9a9a9a; }
.ti.white { background: #fff; }
.ti.on { background: #e3eef9; box-shadow: inset 0 0 0 1px #0a78d7; }
.ic { width: 15px; height: 16px; flex: none; }
.grip {
  width: 3px;
  height: 18px;
  margin-left: 1px;
  background: repeating-linear-gradient(#b8b8b8 0 2px, transparent 2px 4px);
}
.sep { width: 1px; height: 18px; margin: 0 2px; background: #c4c4c4; }
.r0 .sep { margin: 0 2px 0 3px; }
.r1 .sep { margin: 0 3px 0 2px; }
.r2 .sep { margin: 0 3px 0 5px; }
.r3 .sep { margin: 0 3px; }
.more { font-size: 14px; font-weight: 700; line-height: 16px; margin-left: auto; padding-right: 4px; align-self: flex-start; }
.menu-more { margin-top: -6px; }
.caret {
  flex: none;
  width: 0;
  height: 0;
  border: 3.500px solid transparent;
  border-top: 4px solid #222;
  border-bottom: 0;
  margin: 0 3px 0 2px;
}
.caret.tight { margin: 0 2px 0 -2px; }
.r1 .caret.tight { margin: 0 5px 0 -2px; }
.r5 .caret.tight { margin: 0 6px 0 -2px; }
.menubar .caret, .user-box .caret { margin: 0 0 0 6px; }
.combo {
  display: flex;
  align-items: center;
  height: 24px;
  box-sizing: border-box;
  padding: 0 3px;
  background: #fff;
  margin-left: 2px;
}
.combo .caret { margin: 0 3px 0 auto; }
.r3 .combo { margin: 0 2px 0 3px; }
.inputs .combo { margin: 0 2px 0 0; }
.inputs .sep { margin: 0 0 0 2px; }
.inputs .sep ~ .sep { margin: 0 0 0 2px; }
.lbl { color: #8a8a8a; margin: 0 3px; }
.lbl.dark { color: #111; margin: 0 4px 0 8px; }
.spin {
  position: relative;
  display: block;
  height: 23px;
  line-height: 21px;
  box-sizing: border-box;
  border: 1px solid #7a7a7a;
  padding-right: 18px;
  text-align: right;
  color: #888;
  background: #f6f6f6;
}
.spin-btns {
  position: absolute;
  right: 2px;
  top: 1px;
  width: 12px;
  display: flex;
  flex-direction: column;
  align-items: center;
}
.spin-btns b { height: 10px; line-height: 12px; font-size: 10px; font-weight: 400; color: #555; }
.chk { width: 11px; height: 11px; border: 1px solid #8a8a8a; margin-left: 3px; background: #fff; }
.nav { display: flex; align-items: center; justify-content: center; width: 24px; }
.nav svg { width: 14px; height: 14px; }
.r5 .nav:nth-child(n+6) { width: 23px; }

/* tableau */
.side-strip { width: 13px; margin-top: -25px; display: flex; flex-direction: column; align-items: flex-start; }
.close-x { width: 9px; height: 9px; margin-left: 0; }
.strip-dots {
  width: 9px;
  flex: 1;
  margin: 3px 0 6px 2px;
  background:
    repeating-linear-gradient(#c8c8c8 0 2px, transparent 2px 6px) 0 0 / 3px 100% no-repeat,
    repeating-linear-gradient(#c8c8c8 0 2px, transparent 2px 6px) 5px 0 / 3px 100% no-repeat;
}
.grid-box {
  display: flex;
  flex-direction: column;
  width: 1117px;
  height: 172px;
  box-sizing: border-box;
  border: 1px solid #bcbcbc;
  background: #fff;
}
.grid-table {
  display: grid;
  grid-template-columns: 33px 72px 56px 36px 33px 202px 165px 156px 61px 39px 38px 49px 61px 62px 52px;
  grid-template-rows: 19px 19px;
  margin-top: 1px;
  flex: 1;
  align-content: start;
}
.th {
  background: linear-gradient(#fbdca6, #f3c26c);
  border-right: 1px solid #d8c8a0;
  color: #5a0a6a;
  text-align: center;
  line-height: 18px;
  white-space: nowrap;
  overflow: hidden;
}
.th:first-child { background: #fff; }
.th:nth-child(15) { text-align: left; padding-left: 11px; }
.td {
  background: #b1d4f1;
  border-right: 1px solid #a5bfd8;
  border-bottom: 1px solid #aaa;
  line-height: 18px;
  text-align: center;
  color: #5a0a6a;
  font-family: "DejaVu Sans Mono", monospace;
  font-size: 11px;
}
.td.active { background: #d9e9f8; border-left: 2px solid #111; }
.hscroll {
  display: flex;
  align-items: center;
  height: 15px;
  margin-bottom: 1px;
  background: #f0f0f0;
}
.hscroll svg { width: 16px; height: 15px; flex: none; }
.hthumb { width: 718px; height: 15px; background: #cdcdcd; margin-left: 1px; }
.hright { margin-left: auto; }

/* panneau gauche */
.pane-title {
  flex: none;
  display: flex;
  align-items: center;
  justify-content: space-between;
  height: 17px;
  background: #0a58dc;
  color: #fff;
  padding: 0 4px 0 0;
  font-size: 12px;
  letter-spacing: .5px;
}
.pane-btns { display: flex; gap: 5px; }
.pane-btns svg { width: 12px; height: 12px; }
.pane-tab {
  flex: none;
  height: 22px;
  line-height: 20px;
  box-sizing: border-box;
  border: 1px solid #a0a0a0;
  border-left-color: #ddd;
  border-top-color: #ccc;
  text-align: center;
  background: #f0f0f0;
}
.tree-box {
  flex: 1;
  min-height: 0;
  display: flex;
  flex-direction: column;
  margin: 0 0 1px 2px;
  border: 1px solid #a0a0a0;
  background: #fff;
}
.tree-tools { display: flex; height: 28px; padding: 5px 0 0 4px; gap: 3px; box-sizing: border-box; flex: none; }
.tree-tools svg { width: 20px; height: 18px; }
.tree-wrap { flex: 1; min-height: 0; display: flex; }
.tree { flex: 1; overflow: hidden; }
.tr { display: flex; align-items: center; height: 16px; white-space: nowrap; }
.fold { padding-left: 9px; }
.chev { width: 10px; height: 10px; flex: none; }
.fld { width: 16px; height: 14px; margin: 0 4px 0 5px; flex: none; }
.leaf {
  padding-left: 43px;
  background:
    repeating-linear-gradient(#888 0 1px, transparent 1px 2px) 12px 0 / 1px 100% no-repeat,
    repeating-linear-gradient(#888 0 1px, transparent 1px 2px) 32px 0 / 1px 100% no-repeat,
    repeating-linear-gradient(to right, #888 0 1px, transparent 1px 2px) 32px 8px / 11px 1px no-repeat;
}
.leaf.last {
  background:
    repeating-linear-gradient(#888 0 1px, transparent 1px 2px) 12px 0 / 1px 100% no-repeat,
    repeating-linear-gradient(#888 0 1px, transparent 1px 2px) 32px 0 / 1px 50% no-repeat,
    repeating-linear-gradient(to right, #888 0 1px, transparent 1px 2px) 32px 8px / 11px 1px no-repeat;
}
.tree-ic { width: 15px; height: 15px; flex: none; margin-right: 5px; }
.tr-label { line-height: 16px; }
.sel .tr-label { background: #d8d8d8; padding-right: 1px; }
.m { font-family: "DejaVu Sans Mono", monospace; font-size: 10px; }
.bars { width: 15px; height: 15px; flex: none; margin-left: 1px; }
.newtag {
  font: 700 9px/9px "Liberation Sans", sans-serif;
  background: #ffe000;
  color: #111;
  margin: -8px 0 0 1px;
  padding: 0 1px;
}
.vscroll { width: 15px; flex: none; display: flex; flex-direction: column; background: #f0f0f0; margin: 0 2px 0 0; }
.vscroll svg { width: 15px; height: 17px; flex: none; }
.vtrack { flex: 1; }
.vthumb { height: 410px; background: #cdcdcd; }

/* état */
.status { display: flex; height: 20px; gap: 2px; box-sizing: border-box; border-top: 1px solid #c8c8c8; }
.st {
  box-sizing: border-box;
  height: 18px;
  border: 1px solid #ddd;
  background: #fbfbfb;
  line-height: 15px;
  padding-left: 1px;
  white-space: nowrap;
}
.st.w1 { width: 148px; }
.st.w2 { width: 78px; }
.st.w3 { width: 98px; }
.st.w4 { width: 48px; }
.st.w5 { flex: 1; }
.ime {
  position: absolute;
  right: 6px;
  bottom: 40px;
  display: flex;
  align-items: center;
  height: 26px;
  gap: 6px;
}
.ime svg { width: 16px; height: 17px; flex: none; }
.ime svg.ime-s { width: 26px; height: 26px; }
.ime-a { font: 400 20px/20px "Liberation Sans", sans-serif; color: #1a75c4; margin-left: 1px; }
.ime-dots { font: 700 14px/14px "Liberation Sans", sans-serif; color: #1a75c4; width: 16px; }

/* barre des tâches */
.taskbar { display: flex; height: 40px; background: #05090b; color: #fff; }
.start { width: 48px; display: flex; align-items: center; justify-content: center; background: #000; }
.start svg { width: 18px; height: 18px; }
.search {
  width: 344px;
  display: flex;
  align-items: center;
  box-sizing: border-box;
  padding-left: 10px;
  background: #333;
  margin-right: 2px;
}
.ring { width: 14px; height: 14px; border: 3px solid #e0e0e0; border-radius: 50%; }
.search-text { font-size: 14px; color: #858585; margin-left: 6px; width: 280px; white-space: nowrap; overflow: hidden; }
.search svg { width: 14px; height: 20px; margin-left: 0; }
.app-cell { width: 50px; display: flex; align-items: center; justify-content: center; box-sizing: border-box; }
.app-cell svg { width: 28px; height: 28px; }
.app-cell.narrow { width: 48px; }
.app-cell.run { border-bottom: 2px solid #6aa8e8; }
.app-cell.active { background: #3a4246; }
.tray { display: flex; align-items: center; margin-left: 228px; }
.cpu, .clock { display: flex; flex-direction: column; align-items: center; gap: 2px; line-height: 16px; }
.cpu { width: 60px; }
.clock { width: 60px; }
.tr1 { width: 14px; margin: 0 5px 0 13px; }
.tr2 { width: 18px; margin: 0 3px 0 5px; }
.tr3 { width: 16px; margin: 0 4px; }
.tr4 { width: 16px; margin: 0 3px 0 2px; }
.tr5 { font: 400 17px/17px "Liberation Serif", serif; margin: 0 7px; }
.tr6 { width: 18px; margin: 0 4px 0 3px; }
.notif { position: relative; margin-left: 26px; }
.notif svg { width: 16px; height: 16px; }
.notif-n {
  position: absolute;
  left: -2px;
  top: 6px;
  width: 20px;
  height: 20px;
  margin-left: 8px;
  border-radius: 50%;
  background: #3c3c3c;
  border: 1px solid #666;
  text-align: center;
  font-size: 12px;
  box-sizing: border-box;
  line-height: 18px;
}

/* textes du canevas */
.bubble-t { font: 13px "Liberation Sans", sans-serif; fill: #d0d0d0; }
.dim-t { font: 14px "Liberation Sans", sans-serif; fill: #c8c8c8; }
</style>

<style>
html, body { margin: 0; padding: 0; background: #f0f0f0; overflow: hidden; }
</style>
